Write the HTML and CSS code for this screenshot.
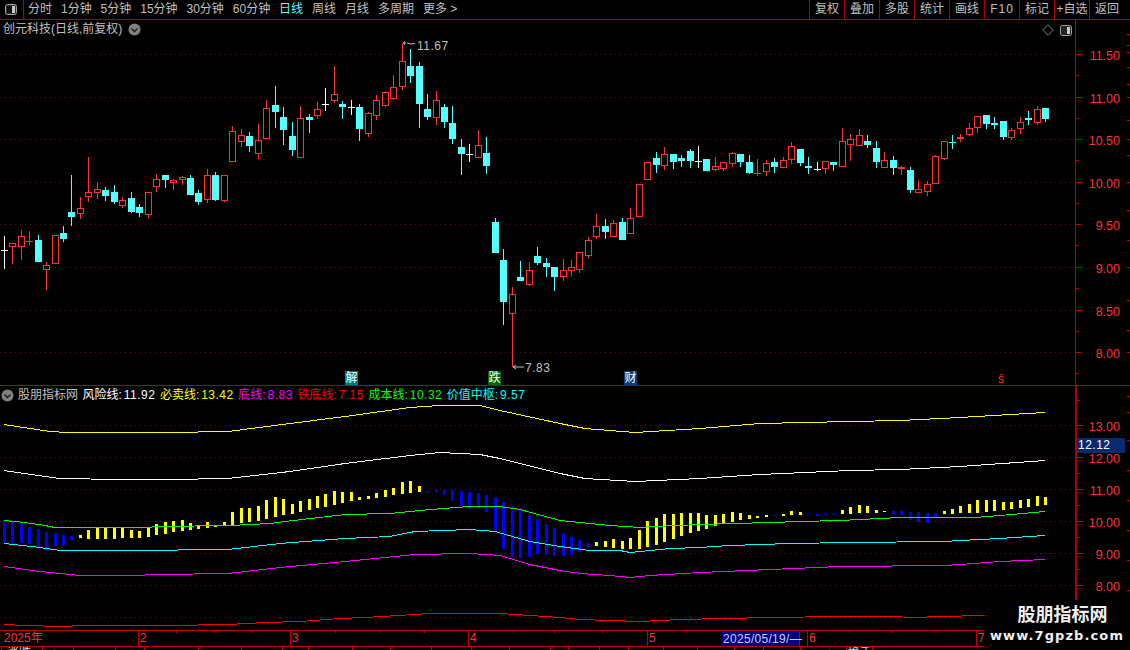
FILE: index.html
```html
<!DOCTYPE html>
<html lang="zh-CN">
<head>
    <meta charset="UTF-8">
    <meta name="viewport" content="width=device-width, initial-scale=1.0">
    <title>创元科技 日线</title>
    <link rel="stylesheet" href="styles.css">
</head>
<body>
    <div class="app">
        <div class="toolbar">
            <div class="toggle">
                <svg class="split-icon" width="12" height="11" viewBox="0 0 12 11">
                    <rect x="0.5" y="0.5" width="11" height="10" rx="2" fill="#333" stroke="#a0a0a0"/>
                    <rect x="2" y="2" width="5" height="7" fill="#111"/>
                    <rect x="7" y="2" width="3" height="7" fill="#c8c8c8"/>
                </svg>
            </div>
            <div class="tabs">
                <span>分时</span>
                <span>1分钟</span>
                <span>5分钟</span>
                <span>15分钟</span>
                <span>30分钟</span>
                <span>60分钟</span>
                <span class="active">日线</span>
                <span>周线</span>
                <span>月线</span>
                <span>多周期</span>
                <span>更多 &gt;</span>
            </div>
            <div class="actions">
                <span>复权</span>
                <span>叠加</span>
                <span>多股</span>
                <span>统计</span>
                <span>画线</span>
                <span class="latin">F10</span>
                <span>标记</span>
                <span>+自选</span>
                <span class="last">返回</span>
            </div>
        </div>

        <div class="panel panel-main">
            <div class="chart-title">
                <span>创元科技(日线,前复权)</span>
                <svg class="round-btn" width="13" height="13" viewBox="0 0 13 13">
                    <circle cx="6.5" cy="6.5" r="6" fill="#808080"/>
                    <path d="M3.5 5.5 L6.5 8.5 L9.5 5.5" fill="none" stroke="#1a1a1a" stroke-width="1.4"/>
                </svg>
            </div>
            <div class="chart-tools">
                <svg width="12" height="12" viewBox="0 0 12 12">
                    <path d="M6 0.7 L11.3 6 L6 11.3 L0.7 6 Z" fill="none" stroke="#808080"/>
                </svg>
                <svg width="12" height="11" viewBox="0 0 12 11">
                    <rect x="0.5" y="0.5" width="11" height="10" rx="2" fill="#222" stroke="#a0a0a0"/>
                    <rect x="7" y="2" width="3" height="7" fill="#c8c8c8"/>
                </svg>
            </div>
            <svg id="mainChart" class="chart" width="1130" height="365" viewBox="0 20 1130 365"></svg>
        </div>

        <div class="panel panel-lower">
            <div class="legend">
                <svg class="round-btn" width="13" height="13" viewBox="0 0 13 13">
                    <circle cx="6.5" cy="6.5" r="6" fill="#808080"/>
                    <path d="M3.5 5.5 L6.5 8.5 L9.5 5.5" fill="none" stroke="#1a1a1a" stroke-width="1.4"/>
                </svg>
                <span class="legend-name">股朋指标网</span>
                <span class="white">风险线: <b>11.92</b></span>
                <span class="yellow">必卖线: <b>13.42</b></span>
                <span class="magenta">底线: <b>8.83</b></span>
                <span class="red">铁底线: <b>7.15</b></span>
                <span class="lime">成本线: <b>10.32</b></span>
                <span class="cyan">价值中枢: <b>9.57</b></span>
            </div>
            <svg id="lowerChart" class="chart" width="1130" height="244" viewBox="0 386 1130 244"></svg>
            <div class="cursor-price">12.12</div>
        </div>

        <div class="timebar" id="timebar">
            <span>2025年</span>
            <span>2</span>
            <span>3</span>
            <span>4</span>
            <span>5</span>
            <span>6</span>
            <span>7</span>
            <div class="cursor-date">2025/05/19/—</div>
        </div>

        <div class="statusbar" id="statusbar"></div>

        <div class="watermark">
            <div class="wm-name">股朋指标网</div>
            <div class="wm-url">www.7gpzb.com</div>
        </div>
    </div>

    <script src="chart.js"></script>
</body>
</html>
```

FILE: styles.css
```css
* {
    margin: 0;
    padding: 0;
    box-sizing: border-box;
}

body {
    background: #000;
    font-family: "Liberation Sans", "Noto Sans CJK SC", sans-serif;
    font-size: 12px;
    color: #c0c0c0;
    overflow: hidden;
}

.app {
    position: relative;
    width: 1130px;
    height: 650px;
    background: #000;
    overflow: hidden;
}

/* top bar */
.toolbar {
    display: flex;
    height: 20px;
    border-bottom: 1px solid #b00000;
    line-height: 19px;
}

.toggle {
    width: 24px;
    border-right: 1px solid #b00000;
    padding: 4px 0 0 5px;
}

.split-icon {
    display: block;
}

.tabs {
    display: flex;
    gap: 8.95px;
    padding-left: 4px;
    flex: 1;
}

.tabs .active {
    color: #54ffff;
}

.actions {
    display: flex;
}

.actions span {
    width: 35px;
    text-align: center;
    border-left: 1px solid #b00000;
}

.actions .last {
    width: 41px;
    padding-right: 6px;
}

.actions .latin {
    letter-spacing: 1px;
}

/* chart panels */
.panel {
    position: relative;
}

.panel-main {
    height: 365px;
}

.panel-lower {
    height: 245px;
    border-top: 1px solid #b00000;
}

.chart {
    display: block;
}

.chart-title {
    position: absolute;
    left: 3px;
    top: 1px;
    display: flex;
    align-items: center;
    gap: 6px;
    line-height: 16px;
}

.chart-tools {
    position: absolute;
    left: 1042px;
    top: 4px;
    display: flex;
    align-items: center;
    gap: 6px;
}

.chart-tools svg {
    display: block;
}

.legend {
    position: absolute;
    left: 1px;
    top: 1px;
    display: flex;
    align-items: center;
    line-height: 16px;
    white-space: nowrap;
}

.legend span {
    margin-left: 4.6px;
    word-spacing: -1.5px;
}

.legend .legend-name {
    margin-left: 4px;
}

.legend b {
    font-weight: normal;
    letter-spacing: 0.5px;
}

.white { color: #fff; }
.yellow { color: #ffff00; }
.magenta { color: #ff00ff; }
.red { color: #ff0000; }
.lime { color: #00ff00; }
.cyan { color: #00ffff; }

.cursor-price {
    position: absolute;
    left: 1077px;
    top: 52px;
    width: 48px;
    height: 15px;
    line-height: 15px;
    padding-left: 1px;
    background: #0a2a70;
    color: #fff;
    letter-spacing: 0.5px;
}

/* svg bits */
.grid {
    stroke: #8b0000;
    stroke-width: 1;
    stroke-dasharray: 1 4;
}

.axis {
    stroke: #c00000;
    stroke-width: 1;
}

.axis-thick {
    stroke: #b00000;
    stroke-width: 2;
}

.axis-label {
    fill: #ff3232;
    font-size: 12.5px;
    text-anchor: end;
}

.note {
    fill: #c0c0c0;
    font-size: 12px;
    letter-spacing: 0.5px;
}

.note-line {
    stroke: #c0c0c0;
    fill: none;
}

.up {
    fill: #000;
    stroke: #ff3232;
    stroke-width: 1;
}

.up-solid { fill: #ff3232; }
.down { fill: #54ffff; }
.flat { fill: #fff; }

.bar-yellow { fill: #ffff00; }
.bar-blue { fill: #0000ff; }

.curve {
    fill: none;
    stroke-width: 1;
    shape-rendering: crispEdges;
}

.tag {
    fill: #fff;
    font-size: 12px;
    text-anchor: middle;
}

/* time axis */
.timebar {
    position: relative;
    display: grid;
    grid-template-columns: 138px 152px 178px 179px 160px 169px 1fr;
    width: 984px;
    height: 17px;
    border-top: 1px solid #c00000;
    border-bottom: 1px solid #c00000;
    color: #ff3232;
    font-size: 12px;
    line-height: 15px;
}

.timebar span {
    padding-left: 1px;
    border-left: 1px solid #c00000;
}

.timebar span:first-child {
    padding-left: 4px;
    border-left: 0;
}

.tick {
    position: absolute;
    top: 0;
    width: 1px;
    height: 2px;
    background: #c00000;
}

.cursor-date {
    position: absolute;
    left: 722px;
    top: 1px;
    width: 78px;
    height: 14px;
    line-height: 14px;
    padding-left: 1px;
    background: #000080;
    color: #c0d0ff;
    font-size: 12px;
    letter-spacing: 0.3px;
    border-right: 1px solid #c00000;
    white-space: nowrap;
}

.statusbar {
    display: flex;
    height: 3px;
    overflow: hidden;
    font-size: 12px;
    line-height: 12px;
    color: #e0e0e0;
}

.statusbar div {
    flex: none;
    height: 12px;
    border-left: 1px solid #c00000;
    white-space: nowrap;
    overflow: hidden;
}

.watermark {
    position: absolute;
    right: 0;
    bottom: 0;
    width: 146px;
    height: 50px;
    background: #000;
    color: #f0f0f0;
    text-align: center;
    font-weight: bold;
}

.wm-name {
    font-size: 18px;
    line-height: 24px;
    margin-top: 3px;
    padding-left: 11px;
}

.wm-url {
    font-family: "DejaVu Sans", sans-serif;
    font-size: 13px;
    line-height: 18px;
    letter-spacing: 1.1px;
}
```

FILE: chart.js
```js
const SVG_NS = 'http://www.w3.org/2000/svg';

// type, high, low, body top, body bottom (page pixels)
const candles = [
    ['w',236,269,250,250],['r',243,264,243,247],['r',230,260,236,247],['r',231,245,241,241],
    ['c',235,262,240,262],['r',262,290,265,270],['r',235,264,235,264],['c',226,242,233,239],
    ['c',175,226,212,217],['r',197,219,208,214],['r',157,202,192,197],['r',182,199,189,193],
    ['c',187,201,190,196],['c',185,204,192,202],['r',197,208,200,206],['c',192,213,198,212],
    ['c',204,217,207,213],['r',192,218,192,215],['r',174,192,179,187],['c',175,188,175,180],
    ['r',179,190,180,183],['r',176,185,177,180],['c',175,195,178,195],['c',190,205,193,202],
    ['r',169,203,175,200],['c',172,201,175,200],['r',175,202,175,201],['r',126,162,131,162],
    ['r',129,147,135,142],['c',132,152,136,146],['r',124,159,140,154],['r',100,139,108,139],
    ['c',86,128,105,112],['c',107,145,117,130],['c',122,156,136,150],['r',106,158,118,158],
    ['c',114,133,117,120],['r',102,119,109,116],['w',88,111,104,104],['r',66,103,94,101],
    ['c',101,119,104,107],['w',100,115,107,107],['c',104,141,107,129],['r',112,137,113,134],
    ['r',95,120,100,116],['r',91,107,92,106],['r',75,100,87,99],['r',43,90,61,87],
    ['c',49,83,66,76],['c',62,128,66,104],['c',94,120,109,117],['r',91,125,100,118],
    ['c',104,128,107,122],['c',106,144,123,139],['c',139,175,147,154],['w',144,162,154,154],
    ['r',130,158,145,158],['c',137,174,153,166],['c',218,253,222,253],['c',249,325,260,302],
    ['r',287,367,294,314],['c',261,281,277,281],['r',262,286,270,285],['c',247,265,256,263],
    ['c',258,277,263,267],['c',267,291,267,277],['r',259,281,270,277],['r',260,276,267,271],
    ['r',252,273,252,270],['r',237,258,240,256],['r',214,239,226,237],['c',219,239,226,232],
    ['r',220,237,223,237],['c',218,240,222,240],['r',208,234,218,234],['r',184,217,184,217],
    ['r',162,180,162,180],['c',152,173,158,165],['r',147,170,154,166],['c',154,169,154,162],
    ['c',155,167,158,161],['c',149,168,151,161],['w',146,168,161,161],['c',159,171,159,171],
    ['r',157,171,166,170],['r',162,171,162,169],['r',152,167,153,164],['c',154,167,154,162],
    ['c',155,174,162,173],['r',159,176,173,173],['r',160,176,163,172],['c',158,173,162,167],
    ['r',157,168,160,168],['r',142,164,146,160],['c',149,166,149,163],['c',157,174,166,168],
    ['w',162,171,169,169],['r',161,174,161,169],['c',162,171,162,165],['r',128,167,141,167],
    ['r',134,161,139,145],['r',129,146,135,146],['c',135,148,141,145],['c',141,168,148,162],
    ['r',152,168,160,168],['c',156,175,160,168],['r',166,175,167,169],['c',167,193,170,190],
    ['r',180,193,189,193],['r',181,196,184,192],['r',155,184,156,184],['r',141,160,141,159],
    ['c',135,149,142,143],['r',134,142,137,139],['r',123,136,128,135],['r',116,133,116,128],
    ['c',115,129,115,124],['c',117,129,123,125],['c',121,140,121,137],['r',128,140,130,138],
    ['r',117,134,122,129],['c',111,125,118,120],['r',106,125,109,123],['c',108,122,108,119]
];

// top, bottom of the bar; blue bars first, the rest yellow unless listed
const bars = [
    [520,543],[522,544],[524,543],[527,544],[529,547],[532,551],[533,546],[535,545],[536,540],
    [535,538],[530,539],[527,539],[527,539],[528,539],[528,538],[530,538],[531,538],[528,537],
    [524,535],[522,534],[521,532],[520,531],[523,530],[526,529],[522,528],[525,527],[522,526],
    [512,525],[508,523],[508,522],[506,521],[500,519],[497,517],[499,515],[504,514],[501,512],
    [499,510],[496,508],[494,507],[491,505],[492,503],[492,501],[497,500],[496,499],[493,498],
    [490,497],[488,495],[482,494],[481,493],[486,492],[491,492],[490,492],[490,495],[490,501],
    [491,506],[492,509],[493,508],[495,512],[498,530],[502,549],[506,557],[510,558],[515,557],
    [519,554],[524,554],[528,556],[533,556],[537,555],[540,552],[543,548],[542,546],[541,547],
    [539,548],[541,549],[538,549],[530,549],[521,547],[518,545],[514,542],[514,539],[513,536],
    [513,533],[513,531],[515,529],[515,526],[514,524],[512,522],[513,520],[515,519],[516,518],
    [515,517],[515,516],[514,516],[511,515],[512,515],[514,515],[514,516],[514,515],[514,515],
    [510,514],[507,514],[505,513],[506,513],[510,513],[511,512],[511,514],[511,515],[512,520],
    [512,522],[513,523],[513,517],[511,514],[509,514],[506,513],[504,513],[500,513],[500,512],
    [500,511],[502,510],[502,509],[500,508],[499,507],[496,506],[497,505]
];

function barIsBlue(i) {
    if (i <= 8) return true;
    if (i >= 50 && i <= 69) return true;
    return [91, 95, 96, 97, 98, 105, 106, 107, 108, 109, 110].includes(i);
}

const curves = [
    { color: '#ffff00', points: [[4,424],[50,431],[68,432],[168,432],[228,431],[290,423],[345,416],[410,407],[440,405],[480,405],[500,410],[560,423],[585,428],[635,432],[700,428],[760,423],[850,421],[900,420],[960,417],[1045,412]] },
    { color: '#ffffff', points: [[4,470],[45,476],[60,478],[120,479],[168,479],[228,478],[290,471],[345,463],[410,455],[440,452],[480,454],[500,458],[560,473],[585,478],[635,481],[700,478],[760,474],[850,470],[900,469],[960,466],[1045,460]] },
    { color: '#00ff00', points: [[4,520],[25,522],[45,525],[55,527],[135,527],[145,527],[160,526],[230,525],[270,523],[285,521],[345,514],[390,513],[430,509],[470,506],[500,506],[520,509],[560,520],[590,523],[610,525],[640,527],[655,526],[700,524],[770,522],[800,521],[840,520],[900,517],[975,517],[1000,515],[1045,511]] },
    { color: '#00ffff', points: [[4,543],[40,547],[60,550],[176,550],[180,549],[228,549],[280,543],[345,538],[390,536],[415,531],[470,529],[495,531],[530,541],[560,546],[590,550],[620,550],[630,552],[650,550],[670,548],[700,547],[730,545],[790,543],[850,542],[945,541],[960,540],[1000,538],[1045,535]] },
    { color: '#ff00ff', points: [[4,566],[40,571],[60,573],[80,575],[130,575],[160,574],[228,573],[280,567],[345,561],[415,554],[470,553],[500,555],[530,564],[560,570],[580,573],[610,575],[630,577],[650,575],[700,572],[770,569],[840,566],[945,565],[960,564],[1000,561],[1045,559]] },
    { color: '#ff0000', points: [[4,624],[26,625],[60,626],[84,625],[168,625],[228,624],[265,622],[300,621],[340,618],[365,617],[415,614],[430,613],[500,613],[530,615],[560,617],[580,619],[640,621],[680,619],[770,617],[840,616],[890,616],[915,617],[940,616],[984,615]] }
];

function add(parent, name, attrs, text) {
    const el = document.createElementNS(SVG_NS, name);
    Object.keys(attrs).forEach(key => el.setAttribute(key, attrs[key]));
    if (text) el.textContent = text;
    parent.appendChild(el);
    return el;
}

function candleX(i) {
    return Math.floor(4.2 + i * 8.4667);
}

function rect(svg, x, y, w, h, cls) {
    add(svg, 'rect', { x, y, width: w, height: h, class: cls, 'shape-rendering': 'crispEdges' });
}

function hLine(svg, x1, x2, y, cls) {
    add(svg, 'line', { x1, x2, y1: y + 0.5, y2: y + 0.5, class: cls, 'shape-rendering': 'crispEdges' });
}

function vLine(svg, x, y1, y2, cls) {
    add(svg, 'line', { x1: x + 0.5, x2: x + 0.5, y1, y2, class: cls, 'shape-rendering': 'crispEdges' });
}

function drawCandles(svg) {
    candles.forEach((c, i) => {
        const [type, high, low, top, bottom] = c;
        const x = candleX(i);
        if (type === 'r') {
            rect(svg, x, high, 1, low - high, 'up-solid');
            if (bottom - top <= 2) {
                rect(svg, x - 3, top, 7, Math.max(1, bottom - top), 'up-solid');
            } else {
                add(svg, 'rect', {
                    x: x - 2.5, y: top + 0.5, width: 6, height: bottom - top - 1,
                    class: 'up', 'shape-rendering': 'crispEdges'
                });
            }
        } else if (type === 'c') {
            rect(svg, x, high, 1, low - high, 'down');
            rect(svg, x - 3, top, 7, Math.max(1, bottom - top), 'down');
        } else {
            rect(svg, x, high, 1, low - high, 'flat');
            rect(svg, x - 3, top, 7, 1, 'flat');
        }
    });
}

function drawMain() {
    const svg = document.getElementById('mainChart');
    const levels = [[54, '11.50'], [97, '11.00'], [139, '10.50'], [182, '10.00'],
                    [224, '9.50'], [267, '9.00'], [310, '8.50'], [352, '8.00']];

    levels.forEach(([y, label]) => {
        hLine(svg, 0, 1075, y, 'grid');
        hLine(svg, 1075, 1082, y, 'axis');
        add(svg, 'text', { x: 1120, y: y + 6, class: 'axis-label' }, label);
        hLine(svg, 1075, 1079, y + 21, 'axis');
    });
    [34, 45, 52, 67, 84, 97, 120, 139, 155, 182, 210, 240, 267, 300, 330, 352].forEach(y => {
        hLine(svg, 1127, 1130, y, 'axis');
    });
    vLine(svg, 1075, 20, 385, 'axis');

    drawCandles(svg);

    // high / low markers
    add(svg, 'path', { d: 'M403.5 43 H406 M403.5 43 L405 41 M403.5 43 L405 45 M407 43 L411 44 L415 43.5', class: 'note-line' });
    add(svg, 'text', { x: 417, y: 50, class: 'note' }, '11.67');
    add(svg, 'path', { d: 'M513 367 H524 M513 367 L516 365 M513 367 L516 369', class: 'note-line' });
    add(svg, 'text', { x: 525, y: 372, class: 'note' }, '7.83');

    // event tags above the separator
    [[345, '#007b7b', '解'], [488, '#006b00', '跌'], [624, '#063f78', '财']].forEach(([x, bg, label]) => {
        rect(svg, x, 371, 13, 14, '');
        svg.lastChild.setAttribute('fill', bg);
        add(svg, 'text', { x: x + 6.5, y: 382, class: 'tag' }, label);
    });
    const s = add(svg, 'text', { x: 1001, y: 383, class: 'tag' }, 'ŝ');
    s.setAttribute('style', 'fill: #ff3232');
}

function drawLower() {
    const svg = document.getElementById('lowerChart');
    const levels = [[425, '13.00'], [457, '12.00'], [489, '11.00'], [521, '10.00'],
                    [553, '9.00'], [585, '8.00'], [617, '']];

    levels.forEach(([y, label]) => {
        hLine(svg, 0, 1076, y, 'grid');
        if (y < 600) {
            hLine(svg, 1076, 1083, y, 'axis');
            add(svg, 'text', { x: 1120, y: y + 6, class: 'axis-label' }, label);
        }
    });
    [400, 441, 473, 505, 537, 569].forEach(y => hLine(svg, 1076, 1080, y, 'axis'));
    [396, 412, 440, 470, 500, 530, 560, 590].forEach(y => hLine(svg, 1127, 1130, y, 'axis'));
    add(svg, 'line', { x1: 1076, x2: 1076, y1: 386, y2: 600, class: 'axis-thick', 'shape-rendering': 'crispEdges' });

    bars.forEach((b, i) => {
        const x = candleX(i);
        rect(svg, x - 1, b[0], 3, b[1] - b[0], barIsBlue(i) ? 'bar-blue' : 'bar-yellow');
    });

    curves.forEach(curve => {
        add(svg, 'polyline', {
            points: curve.points.map(p => p[0] + ',' + (p[1] + 0.5)).join(' '),
            class: 'curve',
            stroke: curve.color
        });
    });
}

function drawTimebarTicks() {
    const bar = document.getElementById('timebar');
    [176, 214, 252, 335, 379, 424, 513, 554, 602, 686, 849, 892, 934].forEach(x => {
        const tick = document.createElement('i');
        tick.className = 'tick';
        tick.style.left = x + 'px';
        bar.appendChild(tick);
    });
}

function drawStatusbar() {
    const bar = document.getElementById('statusbar');
    // left edge, text, text indent
    const cells = [[1, '涨跌', 5], [42, '+', 8], [73], [115], [144], [198], [241], [282], [308], [352], [390],
                   [431], [471], [509], [550], [568], [599], [628], [663], [697], [734], [763], [800, '+', 25], [846, '换手', 1], [872]];
    cells.forEach((cell, i) => {
        const div = document.createElement('div');
        const next = cells[i + 1] ? cells[i + 1][0] : cell[0];
        div.style.width = (next - cell[0]) + 'px';
        if (i === 0) div.style.marginLeft = cell[0] + 'px';
        if (cell[0] === 846) div.style.color = '#54ffff';
        if (cell[1]) {
            div.textContent = cell[1];
            div.style.textIndent = cell[2] + 'px';
        }
        bar.appendChild(div);
    });
}

drawMain();
drawLower();
drawTimebarTicks();
drawStatusbar();
```
